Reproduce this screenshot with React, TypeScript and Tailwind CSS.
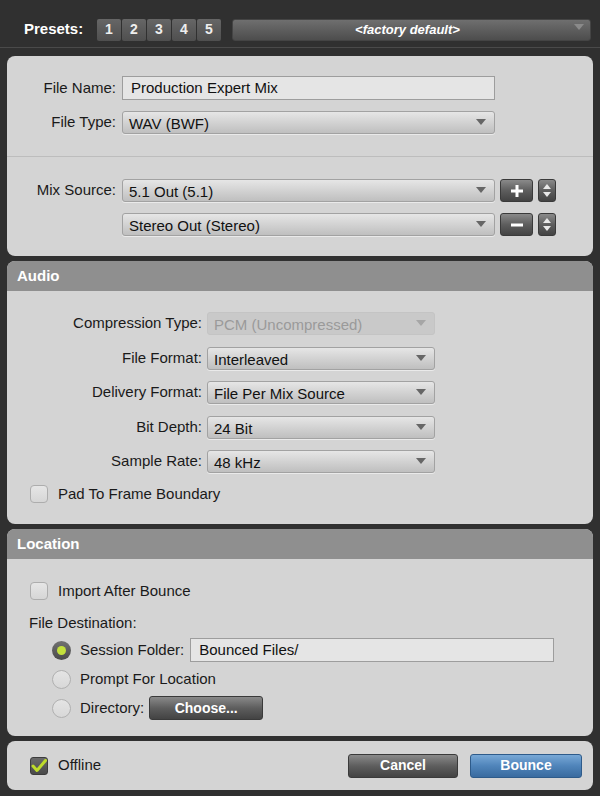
import React from 'react';

const font = { fontFamily: '"Liberation Sans", Arial, sans-serif' };

const Arrow = ({ className = 'text-[#6b6b6b]' }: { className?: string }) => (
    <svg width="10" height="7" viewBox="0 0 10 7" className={className}>
        <path d="M0 0 L10 0 L5 6 Z" fill="currentColor" />
    </svg>
);

const Select: React.FC<{ value: string; w: string; disabled?: boolean }> = ({ value, w, disabled }) => (
    <div
        className={`${w} h-[23px] flex items-center justify-between pl-[6px] pr-[8px] rounded-[3px] border ${
            disabled
                ? 'border-[#c4c4c4] bg-[#c9c9c9] text-[#9a9a9a]'
                : 'border-[#a2a2a2] bg-gradient-to-b from-[#e6e6e6] to-[#bfbfbf] text-[#111] shadow-[0_1px_0_rgba(255,255,255,0.5)]'
        }`}
    >
        <span className="text-[15px] leading-none pt-[2px]">{value}</span>
        <Arrow className={disabled ? 'text-[#a6a6a6]' : 'text-[#666]'} />
    </div>
);

const DarkBtn: React.FC<{ children: React.ReactNode; className?: string }> = ({ children, className = '' }) => (
    <div
        className={`flex items-center justify-center rounded-[3px] border border-[#3a3a3a] bg-gradient-to-b from-[#8a8a8a] via-[#5e5e5e] to-[#434343] text-white font-bold ${className}`}
    >
        {children}
    </div>
);

const Stepper = () => (
    <DarkBtn className="w-[18px] h-[23px] flex-col gap-[3px]">
        <svg width="8" height="5" viewBox="0 0 8 5"><path d="M0 5 L8 5 L4 0 Z" fill="#e8e8e8" /></svg>
        <svg width="8" height="5" viewBox="0 0 8 5"><path d="M0 0 L8 0 L4 5 Z" fill="#e8e8e8" /></svg>
    </DarkBtn>
);

const Checkbox: React.FC<{ checked?: boolean }> = ({ checked }) =>
    checked ? (
        <div className="w-[18px] h-[18px] rounded-[3px] bg-gradient-to-b from-[#6a6a6a] to-[#4a4a4a] border border-[#3c3c3c] flex items-center justify-center">
            <svg width="16" height="14" viewBox="0 0 16 14">
                <path d="M2 7 L6 11.5 L14.5 1.5" stroke="#bedc2a" strokeWidth="3" fill="none" strokeLinecap="round" strokeLinejoin="round" />
            </svg>
        </div>
    ) : (
        <div className="w-[18px] h-[18px] rounded-[4px] bg-gradient-to-b from-[#e6e6e6] to-[#d6d6d6] border border-[#adadad]" />
    );

const Radio: React.FC<{ on?: boolean }> = ({ on }) =>
    on ? (
        <div className="w-[19px] h-[19px] rounded-full bg-gradient-to-b from-[#727272] to-[#4a4a4a] flex items-center justify-center">
            <div className="w-[9px] h-[9px] rounded-full bg-[#c3e03b]" />
        </div>
    ) : (
        <div className="w-[19px] h-[19px] rounded-full bg-gradient-to-b from-[#e4e4e4] to-[#d8d8d8] border border-[#b0b0b0]" />
    );

const Header: React.FC<{ title: string }> = ({ title }) => (
    <div className="h-[30px] bg-[#8f8f8f] rounded-t-[8px] flex items-center pl-[10px] text-white font-bold text-[15px]">
        {title}
    </div>
);

const AudioRow: React.FC<{ label: string; value: string; disabled?: boolean }> = ({ label, value, disabled }) => (
    <div className="flex items-center h-[23px]">
        <div className="w-[195px] text-right text-[15px] text-[#1a1a1a]">{label}</div>
        <div className="ml-[5px]">
            <Select value={value} w="w-[228px]" disabled={disabled} />
        </div>
    </div>
);

export default function App() {
    return (
        <div style={font} className="w-[600px] h-[796px] bg-[#303030] overflow-hidden">
            {/* presets bar */}
            <div className="h-[48px] flex items-center pl-[24px] pr-[9px] pt-[12px] border-b border-[#4a4a4a]">
                <span className="text-white font-bold text-[15px] w-[73px]">Presets:</span>
                <div className="flex gap-[1px]">
                    {['1', '2', '3', '4', '5'].map(n => (
                        <div
                            key={n}
                            className="w-[24px] h-[22px] bg-gradient-to-b from-[#666] to-[#4f4f4f] rounded-[2px] text-[#eee] font-bold text-[14px] flex items-center justify-center"
                        >
                            {n}
                        </div>
                    ))}
                </div>
                <div className="ml-[11px] flex-1 h-[22px] rounded-[3px] bg-gradient-to-b from-[#6f6f6f] to-[#4d4d4d] border border-[#444] relative flex items-center justify-center">
                    <span className="text-white font-bold italic text-[13px] ml-[-8px]">&lt;factory default&gt;</span>
                    <div className="absolute right-[6px] top-[4px]">
                        <Arrow className="text-[#8a8a8a]" />
                    </div>
                </div>
            </div>

            <div className="px-[7px] pt-[8px] flex flex-col gap-[5px]">
                {/* file panel */}
                <div className="bg-[#d4d4d4] rounded-[8px] h-[200px] flex flex-col">
                    <div className="pt-[20px] flex flex-col gap-[11px] pb-[22px] border-b border-[#bdbdbd]">
                        <div className="flex items-center">
                            <div className="w-[109px] text-right text-[15px] text-[#1a1a1a]">File Name:</div>
                            <div className="ml-[6px] w-[373px] h-[24px] bg-[#e5e5e5] border border-[#9d9d9d] flex items-center pl-[8px] text-[15px] text-[#111]">
                                Production Expert Mix
                            </div>
                        </div>
                        <div className="flex items-center">
                            <div className="w-[109px] text-right text-[15px] text-[#1a1a1a]">File Type:</div>
                            <div className="ml-[6px]">
                                <Select value="WAV (BWF)" w="w-[373px]" />
                            </div>
                        </div>
                    </div>
                    <div className="pt-[22px] flex flex-col gap-[11px]">
                        <div className="flex items-center">
                            <div className="w-[109px] text-right text-[15px] text-[#1a1a1a]">Mix Source:</div>
                            <div className="ml-[6px]">
                                <Select value="5.1 Out (5.1)" w="w-[373px]" />
                            </div>
                            <DarkBtn className="ml-[5px] w-[33px] h-[23px]">
                                <svg width="14" height="14" viewBox="0 0 14 14"><path d="M7 1 V13 M1 7 H13" stroke="#fff" strokeWidth="3" /></svg>
                            </DarkBtn>
                            <div className="ml-[5px]"><Stepper /></div>
                        </div>
                        <div className="flex items-center">
                            <div className="w-[109px]" />
                            <div className="ml-[6px]">
                                <Select value="Stereo Out (Stereo)" w="w-[373px]" />
                            </div>
                            <DarkBtn className="ml-[5px] w-[33px] h-[23px]">
                                <svg width="14" height="14" viewBox="0 0 14 14"><path d="M1 7 H13" stroke="#fff" strokeWidth="3" /></svg>
                            </DarkBtn>
                            <div className="ml-[5px]"><Stepper /></div>
                        </div>
                    </div>
                </div>

                {/* audio panel */}
                <div className="bg-[#d4d4d4] rounded-[8px] h-[263px] flex flex-col">
                    <Header title="Audio" />
                    <div className="pt-[21px] flex flex-col gap-[11.5px]">
                        <AudioRow label="Compression Type:" value="PCM (Uncompressed)" disabled />
                        <AudioRow label="File Format:" value="Interleaved" />
                        <AudioRow label="Delivery Format:" value="File Per Mix Source" />
                        <AudioRow label="Bit Depth:" value="24 Bit" />
                        <AudioRow label="Sample Rate:" value="48 kHz" />
                    </div>
                    <div className="mt-[10px] pl-[23px] flex items-center gap-[10px] text-[15px] text-[#1a1a1a]">
                        <Checkbox />
                        <span>Pad To Frame Boundary</span>
                    </div>
                </div>

                {/* location panel */}
                <div className="bg-[#d4d4d4] rounded-[8px] h-[207px] flex flex-col text-[15px] text-[#1a1a1a]">
                    <Header title="Location" />
                    <div className="pl-[23px] pt-[21px] flex items-center gap-[10px]">
                        <Checkbox />
                        <span>Import After Bounce</span>
                    </div>
                    <div className="pl-[22px] mt-[9px]">File Destination:</div>
                    <div className="pl-[45px] mt-[4px] flex flex-col gap-[5px]">
                        <div className="flex items-center h-[24px]">
                            <Radio on />
                            <span className="ml-[9px]">Session Folder:</span>
                            <div className="ml-[6px] w-[364px] h-[24px] bg-[#e5e5e5] border border-[#9d9d9d] flex items-center pl-[8px] text-[#111]">
                                Bounced Files/
                            </div>
                        </div>
                        <div className="flex items-center h-[24px]">
                            <Radio />
                            <span className="ml-[9px]">Prompt For Location</span>
                        </div>
                        <div className="flex items-center h-[24px]">
                            <Radio />
                            <span className="ml-[9px]">Directory:</span>
                            <DarkBtn className="ml-[5px] w-[114px] h-[24px] text-[14px] text-[#eee]">Choose...</DarkBtn>
                        </div>
                    </div>
                </div>

                {/* footer panel */}
                <div className="bg-[#d4d4d4] rounded-[8px] h-[49px] flex items-center pl-[23px] pr-[11px] text-[15px] text-[#1a1a1a]">
                    <Checkbox checked />
                    <span className="ml-[10px]">Offline</span>
                    <div className="flex-1" />
                    <DarkBtn className="w-[110px] h-[24px] text-[14px] text-[#eee]">Cancel</DarkBtn>
                    <div className="ml-[12px] w-[112px] h-[24px] rounded-[3px] border border-[#2e5b8a] bg-gradient-to-b from-[#78a8d6] via-[#4f84ba] to-[#3a6b9f] flex items-center justify-center text-white font-bold text-[14px]">
                        Bounce
                    </div>
                </div>
            </div>
        </div>
    );
}
